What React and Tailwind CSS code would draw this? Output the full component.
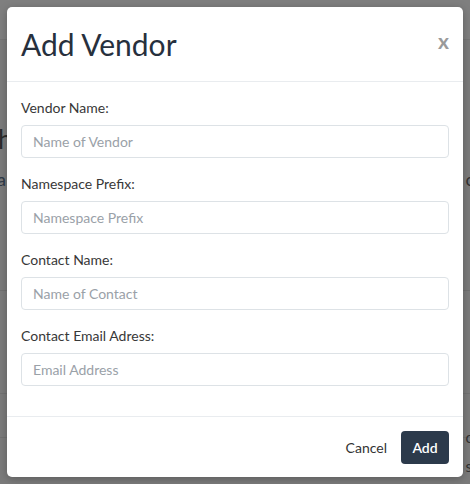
import { useState } from 'react'

const FIELDS = [
  { id: 'vendor',    label: 'Vendor Name:',           ph: 'Name of Vendor' },
  { id: 'prefix',    label: 'Namespace Prefix:',      ph: 'Namespace Prefix' },
  { id: 'contact',   label: 'Contact Name:',          ph: 'Name of Contact' },
  { id: 'email',     label: 'Contact Email Adress:',  ph: 'Email Address' },
]

export default function App() {
  const [vals, setVals] = useState({})

  return (
    <div className="relative w-[470px] h-[484px] overflow-hidden bg-[#7b7b7b]" style={{ fontFamily: 'Lato, "Open Sans", sans-serif' }}>
      {/* dimmed page behind the modal */}
      <div className="absolute inset-0 text-[#3a3a3a]">
        <div className="h-[40px] bg-[#7f7f7f] border-b border-[#757575]" />
        <div className="absolute left-[-2px] top-[126px] text-[26px] leading-none text-[#2a2a2a]">h</div>
        <div className="absolute left-[-3px] top-[170px] text-[18px] leading-none text-[#2f3a48]">a</div>
        <div className="absolute right-[-4px] top-[170px] text-[18px] leading-none text-[#333]">c</div>
        <div className="absolute left-0 right-0 top-[290px] h-px bg-[#707070]" />
        <div className="absolute left-0 right-0 top-[393px] h-px bg-[#727272]" />
        <div className="absolute left-0 right-0 top-[437px] h-px bg-[#727272]" />
        <div className="absolute right-[-4px] top-[430px] text-[15px] leading-none text-[#333]">o</div>
        <div className="absolute right-[-2px] top-[459px] text-[15px] leading-none text-[#333]">s</div>
      </div>

      <div className="relative p-[7px]">
        <div className="bg-white rounded-[5px] shadow-[0_2px_8px_rgba(0,0,0,0.25)]">
          {/* Header */}
          <div className="flex items-start justify-between pl-[14px] pr-[14px] pt-[19px] pb-[19px] border-b border-[#e9ecef]">
            <h4 className="text-[30px] leading-[36px] text-[#27303d]">Add Vendor</h4>
            <button className="text-[21px] leading-none font-bold text-[#9a9a9a] mt-[4px]">x</button>
          </div>

          {/* Body */}
          <div className="px-[14px] pt-[16px] pb-[14px]">
            {FIELDS.map(f => (
              <div key={f.id} className="mb-[16px]">
                <label htmlFor={f.id} className="block text-[14px] leading-[20px] text-[#383838] mb-[7px]">{f.label}</label>
                <input id={f.id} placeholder={f.ph} value={vals[f.id] || ''}
                  onChange={e => setVals({ ...vals, [f.id]: e.target.value })}
                  className="block w-full h-[33px] px-[11px] text-[14px] text-[#333] placeholder:text-[#9aa1a8] border border-[#dde2e6] rounded-[4px] outline-none" />
              </div>
            ))}
          </div>

          {/* Footer */}
          <div className="flex items-center justify-end gap-[14px] px-[14px] pt-[14px] pb-[13px] border-t border-[#e9ecef]">
            <button className="text-[14px] text-[#333]">Cancel</button>
            <button className="h-[33px] w-[48px] rounded-[4px] bg-[#2c3a4b] text-white text-[14px] font-semibold">Add</button>
          </div>
        </div>
      </div>
    </div>
  )
}
